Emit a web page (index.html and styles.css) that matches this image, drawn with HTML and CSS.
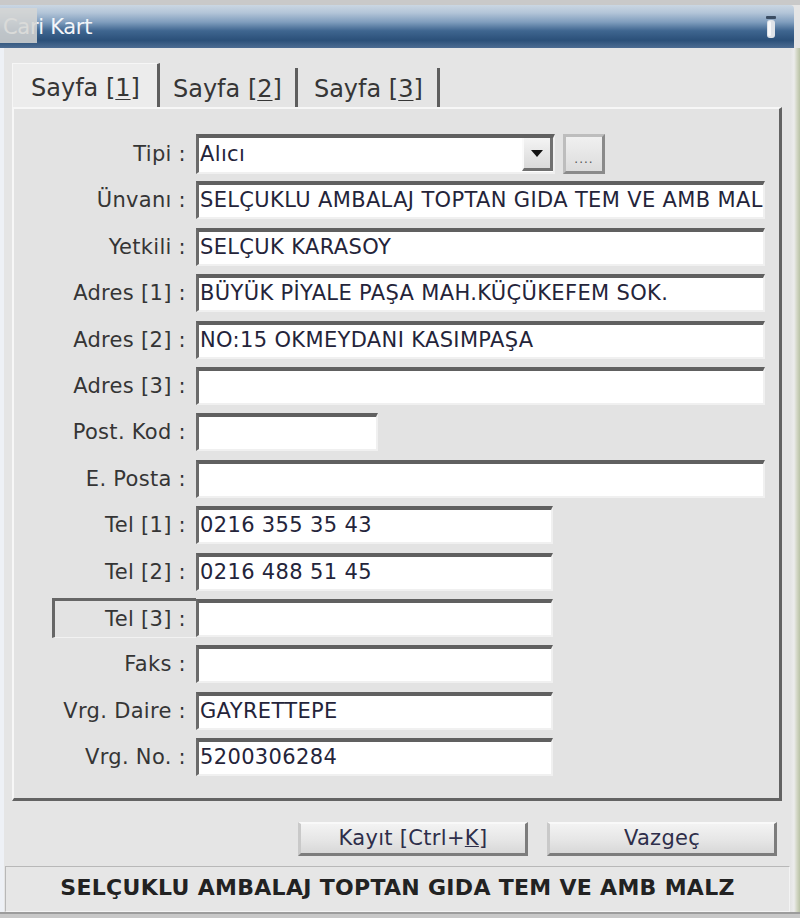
FILE: index.html
```html
<!DOCTYPE html>
<html lang="tr">
<head>
<meta charset="utf-8">
<title>Cari Kart</title>
<link rel="stylesheet" href="styles.css">
</head>
<body>
<div class="window">
  <div class="topstrip"></div>
  <div class="titlebar">
    <span class="title">Cari Kart</span>
    <span class="sysicon"></span>
    <svg class="pin" width="12" height="24" viewBox="0 0 12 24">
      <rect x="1" y="0" width="10" height="3" rx="1" fill="#3b4d63"/>
      <rect x="2" y="4" width="8" height="18" rx="3" fill="#dfe3e8"/>
      <rect x="3" y="5" width="3" height="15" rx="1.5" fill="#f7f8fa"/>
    </svg>
  </div>
  <div class="client">
    <div class="tabs">
      <div class="tab active">Sayfa [<u>1</u>]</div>
      <div class="tab">Sayfa [<u>2</u>]</div>
      <div class="tab">Sayfa [<u>3</u>]</div>
    </div>
    <div class="panel">
      <div class="row">
        <label class="lbl">Tipi :</label>
        <div class="combo">
          <span class="val">Alıcı</span>
          <span class="drop"><svg width="12" height="7" viewBox="0 0 12 7"><path d="M0 0H12L6 7Z" fill="#111"/></svg></span>
        </div>
        <div class="dots">....</div>
      </div>
      <div class="row">
        <label class="lbl">Ünvanı :</label>
        <div class="inp wide">SELÇUKLU AMBALAJ TOPTAN GIDA TEM VE AMB MALZ</div>
      </div>
      <div class="row">
        <label class="lbl">Yetkili :</label>
        <div class="inp wide">SELÇUK KARASOY</div>
      </div>
      <div class="row">
        <label class="lbl">Adres [1] :</label>
        <div class="inp wide">BÜYÜK PİYALE PAŞA MAH.KÜÇÜKEFEM SOK.</div>
      </div>
      <div class="row">
        <label class="lbl">Adres [2] :</label>
        <div class="inp wide">NO:15 OKMEYDANI KASIMPAŞA</div>
      </div>
      <div class="row">
        <label class="lbl">Adres [3] :</label>
        <div class="inp wide"></div>
      </div>
      <div class="row">
        <label class="lbl">Post. Kod :</label>
        <div class="inp short"></div>
      </div>
      <div class="row">
        <label class="lbl">E. Posta :</label>
        <div class="inp wide"></div>
      </div>
      <div class="row">
        <label class="lbl">Tel [1] :</label>
        <div class="inp mid">0216 355 35 43</div>
      </div>
      <div class="row">
        <label class="lbl">Tel [2] :</label>
        <div class="inp mid">0216 488 51 45</div>
      </div>
      <div class="row">
        <label class="lbl boxed">Tel [3] :</label>
        <div class="inp mid"></div>
      </div>
      <div class="row">
        <label class="lbl">Faks :</label>
        <div class="inp mid"></div>
      </div>
      <div class="row">
        <label class="lbl">Vrg. Daire :</label>
        <div class="inp mid">GAYRETTEPE</div>
      </div>
      <div class="row">
        <label class="lbl">Vrg. No. :</label>
        <div class="inp mid">5200306284</div>
      </div>
    </div>
    <div class="buttons">
      <div class="btn">Kayıt [Ctrl+<u>K</u>]</div>
      <div class="btn">Vazgeç</div>
    </div>
    <div class="status">SELÇUKLU AMBALAJ TOPTAN GIDA TEM VE AMB MALZ</div>
  </div>
  <div class="bottomstrip"></div>
</div>
</body>
</html>
```
FILE: styles.css
```css
html, body {
  margin: 0;
  padding: 0;
}
body {
  width: 800px;
  height: 918px;
  overflow: hidden;
  background: #e4e4e4;
  font-family: "DejaVu Sans", "Liberation Sans", sans-serif;
  color: #333;
}
.window {
  width: 800px;
  height: 918px;
  display: flex;
  flex-direction: column;
  background: #e5e5e5;
}
.topstrip {
  height: 5px;
  background: #c9c9c9;
}
.titlebar {
  position: relative;
  height: 43px;
  margin-right: 6px;
  background: linear-gradient(to bottom, #cbd7e3 0%, #b3c5d8 18%, #7f9dbd 40%, #3f6690 60%, #2b5079 82%, #4c6c92 100%);
  border-radius: 0 4px 0 0;
  display: flex;
  align-items: center;
}
.title {
  margin-left: 3px;
  color: #f2f5f9;
  font-size: 21px;
  letter-spacing: -0.3px;
}
.sysicon {
  position: absolute;
  left: 0;
  top: 3px;
  width: 37px;
  height: 35px;
  background: rgba(214, 214, 212, 0.85);
}
.pin {
  position: absolute;
  right: 17px;
  top: 11px;
}
.client {
  flex: 1;
  display: flex;
  flex-direction: column;
  padding: 12px 10px 0 5px;
  background: linear-gradient(to right, #eef1f6 0, #eef1f6 4px, #e5e5e5 4px);
  position: relative;
}
.client::after {
  content: "";
  position: absolute;
  right: 0;
  top: 0;
  bottom: 0;
  width: 10px;
  background: linear-gradient(to right, #e3e3e3 0, #ececec 4px, #d2d6c4 7px, #b9c2a6 10px);
}
.tabs {
  display: flex;
  height: 47px;
  margin-left: 7px;
}
.tab {
  display: flex;
  align-items: center;
  padding: 3px 13px 0 13px;
  font-size: 24px;
  color: #363636;
  border-right: 3px solid #5e5e5e;
  margin-top: 8px;
  height: 36px;
}
.tab.active {
  margin-top: 3px;
  height: 41px;
  background: #ececec;
  border-top: 1px solid #f6f6f6;
  border-left: 1px solid #f6f6f6;
  padding-left: 18px;
  padding-right: 17px;
}
.tab:nth-child(3) {
  padding-left: 16px;
  padding-right: 14px;
}
.tab u {
  text-decoration-thickness: 1px;
  text-underline-offset: 3px;
}
.panel {
  box-sizing: border-box;
  height: 694px;
  margin: 0 8px 0 7px;
  border-top: 2px solid #f7f7f7;
  border-left: 2px solid #f7f7f7;
  border-right: 3px solid #636363;
  border-bottom: 3px solid #636363;
  padding-top: 26px;
  display: flex;
  flex-direction: column;
  gap: 8.4px;
  background: #e3e3e3;
}
.row {
  display: flex;
  align-items: center;
  height: 38px;
}
.lbl {
  box-sizing: border-box;
  width: 182px;
  padding-right: 10px;
  text-align: right;
  font-size: 21px;
  letter-spacing: 0.3px;
  color: #353535;
  white-space: nowrap;
}
.lbl.boxed {
  width: 144px;
  margin-left: 38px;
  height: 40px;
  line-height: 37px;
  border-top: 3px solid #666;
  border-left: 3px solid #666;
  border-bottom: 1px solid #f2f2f2;
}
.inp, .combo {
  box-sizing: border-box;
  height: 38px;
  background: #fff;
  border-top: 4px solid #606060;
  border-left: 3px solid #6a6a6a;
  border-right: 2px solid #f0f0f0;
  border-bottom: 2px solid #f0f0f0;
  font-size: 21px;
  line-height: 31px;
  padding-left: 1px;
  color: #24243a;
  white-space: nowrap;
  overflow: hidden;
  letter-spacing: 0.35px;
}
.wide { width: 569px; }
.mid { width: 357px; }
.short { width: 182px; }
.combo {
  width: 359px;
  height: 40px;
  display: flex;
  justify-content: space-between;
  padding-right: 0;
}
.combo .val {
  line-height: 33px;
}
.drop {
  box-sizing: border-box;
  width: 31px;
  height: 33px;
  background: linear-gradient(to bottom, #f4f4f4, #d9d9d9);
  border-left: 2px solid #fafafa;
  border-right: 3px solid #707070;
  border-bottom: 3px solid #707070;
  display: flex;
  align-items: center;
  justify-content: center;
}
.dots {
  box-sizing: border-box;
  width: 42px;
  height: 40px;
  margin-left: 8px;
  background: linear-gradient(to bottom, #f0f0f0, #dcdcdc);
  border: 3px solid #bdbdbd;
  border-right-color: #8a8a8a;
  border-bottom-color: #8a8a8a;
  font-size: 12px;
  line-height: 12px;
  color: #555;
  text-align: center;
  padding-top: 16px;
  letter-spacing: 1px;
}
.buttons {
  display: flex;
  justify-content: flex-end;
  gap: 19px;
  margin: 21px 13px 0 0;
  height: 34px;
}
.btn {
  box-sizing: border-box;
  width: 230px;
  height: 34px;
  background: linear-gradient(to bottom, #f3f3f3 0%, #e6e6e6 55%, #d8d8d8 100%);
  border-top: 2px solid #f9f9f9;
  border-left: 3px solid #c9c9c9;
  border-right: 3px solid #7c7c7c;
  border-bottom: 3px solid #7c7c7c;
  font-size: 21px;
  line-height: 28px;
  text-align: center;
  color: #2e2e4a;
  letter-spacing: 0.3px;
}
.btn u {
  text-decoration-thickness: 1px;
}
.status {
  box-sizing: border-box;
  margin-top: 10px;
  height: 46px;
  border: 1px solid #b8b8b8;
  border-right-color: #f3f3f3;
  border-bottom-color: #f3f3f3;
  background: #e6e6e6;
  font-weight: bold;
  font-size: 22px;
  line-height: 42px;
  text-align: center;
  color: #222;
  letter-spacing: 0.3px;
}
.bottomstrip {
  height: 6px;
  background: linear-gradient(to bottom, #9c9c9c 0, #9c9c9c 2px, #c8c8c8 2px);
}
```
